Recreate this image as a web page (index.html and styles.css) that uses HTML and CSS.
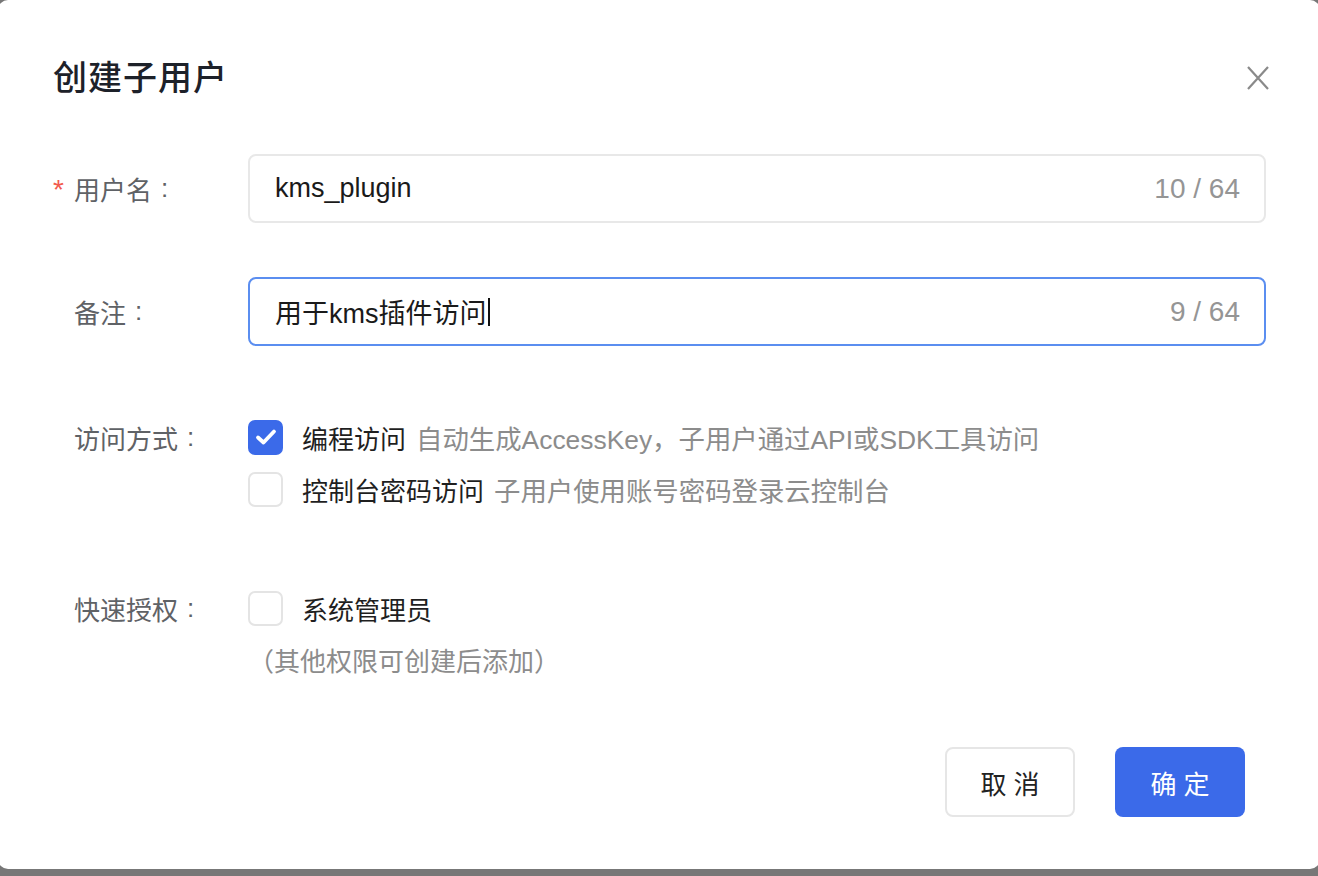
FILE: index.html
```html
<!DOCTYPE html>
<html lang="zh-CN">
<head>
<meta charset="utf-8">
<title>创建子用户</title>
<link rel="stylesheet" href="styles.css">
</head>
<body>
<div class="dialog">
  <header class="dialog-header">
    <h1 class="title">创建子用户</h1>
    <button class="close" type="button" aria-label="关闭">
      <svg width="24" height="24" viewBox="0 0 24 24"><path d="M2 1 L22 23 M22 1 L2 23" stroke="#8a8a8a" stroke-width="2.2" fill="none"/></svg>
    </button>
  </header>
  <div class="form">
    <div class="row row-input">
      <div class="label"><span class="req">*</span>用户名<span class="colon">:</span></div>
      <div class="input"><span class="value">kms_plugin</span><span class="count">10 / 64</span></div>
    </div>
    <div class="row row-input row-gap">
      <div class="label">备注<span class="colon">:</span></div>
      <div class="input focused"><span class="value">用于kms插件访问<span class="caret"></span></span><span class="count">9 / 64</span></div>
    </div>
    <div class="row row-options row-access">
      <div class="label label-line">访问方式<span class="colon">:</span></div>
      <div class="options">
        <div class="option">
          <span class="checkbox checked">
            <svg width="24" height="24" viewBox="0 0 24 24"><path d="M4 12.5 L9.5 17.5 L20 6.5" stroke="#fff" stroke-width="3.8" fill="none" stroke-linecap="round" stroke-linejoin="round"/></svg>
          </span>
          <span class="opt-text">编程访问</span><span class="opt-desc">自动生成AccessKey，子用户通过API或SDK工具访问</span>
        </div>
        <div class="option">
          <span class="checkbox"></span>
          <span class="opt-text">控制台密码访问</span><span class="opt-desc">子用户使用账号密码登录云控制台</span>
        </div>
      </div>
    </div>
    <div class="row row-options row-grant">
      <div class="label label-line">快速授权<span class="colon">:</span></div>
      <div class="options">
        <div class="option">
          <span class="checkbox"></span>
          <span class="opt-text">系统管理员</span>
        </div>
        <div class="note">（其他权限可创建后添加）</div>
      </div>
    </div>
  </div>
  <footer class="footer">
    <button class="btn btn-cancel" type="button">取 消</button>
    <button class="btn btn-primary" type="button">确 定</button>
  </footer>
</div>
</body>
</html>
```
FILE: styles.css
```css
* { box-sizing: border-box; }
html, body { margin: 0; padding: 0; }
body {
  background: #777777;
  font-family: "Liberation Sans", "Noto Sans CJK SC", sans-serif;
  overflow: hidden;
}
.dialog {
  margin-left: -2px;
  width: 1322px;
  height: 869px;
  background: #ffffff;
  border-radius: 10px;
  padding: 58px 54px 0 55px;
}
.dialog-header {
  display: flex;
  align-items: center;
  justify-content: space-between;
}
.title {
  margin: 0;
  font-size: 34px;
  line-height: 40px;
  font-weight: 500;
  letter-spacing: 1px;
  color: #1d2129;
}
.close {
  border: 0;
  background: none;
  padding: 0;
  width: 24px;
  height: 24px;
  margin-right: -4px;
  display: flex;
}
.form { margin-top: 56px; }
.row {
  display: grid;
  grid-template-columns: 195px 1fr;
}
.row-gap { margin-top: 54px; }
.row-access { margin-top: 65px; }
.row-grant { margin-top: 67px; }
.label {
  font-size: 26px;
  color: #5f6266;
  padding-left: 21px;
  display: flex;
  align-items: center;
  height: 69px;
}
.label-line { height: 52px; }
.req {
  color: #f25a4d;
  width: 21px;
  margin-left: -21px;
  font-size: 28px;
  position: relative;
  top: 1px;
}
.colon { margin-left: 9px; }
.input {
  height: 69px;
  border: 2px solid #e8e8e8;
  border-radius: 8px;
  display: flex;
  align-items: center;
  justify-content: space-between;
  padding: 0 24px 0 25px;
}
.input.focused { border-color: #5b8ef0; }
.value {
  font-size: 27px;
  color: #1a1a1a;
  display: flex;
  align-items: center;
}
.caret {
  display: inline-block;
  width: 2px;
  height: 28px;
  background: #111;
  margin-left: 1px;
}
.count {
  font-size: 28px;
  color: #959595;
}
.options { display: flex; flex-direction: column; }
.option {
  height: 52px;
  display: flex;
  align-items: center;
  font-size: 26px;
}
.checkbox {
  width: 35px;
  height: 35px;
  border: 2px solid #e4e4e4;
  border-radius: 7px;
  display: flex;
  align-items: center;
  justify-content: center;
  margin-right: 19px;
  flex: none;
}
.checkbox.checked {
  background: #3b6ae9;
  border-color: #3b6ae9;
}
.opt-text { color: #1f1f1f; }
.opt-desc { color: #8c8c8c; margin-left: 10px; font-size: 26.4px; }
.note {
  margin-top: 6px;
  line-height: 44px;
  font-size: 26px;
  color: #8c8c8c;
}
.footer {
  margin-top: 63px;
  display: flex;
  justify-content: flex-end;
  gap: 40px;
  padding-right: 21px;
}
.btn {
  width: 130px;
  height: 70px;
  border-radius: 8px;
  font-family: "Liberation Sans", "Noto Sans CJK SC", sans-serif;
  font-size: 26px;
  cursor: pointer;
}
.btn-cancel {
  background: #fff;
  border: 2px solid #e6e6e6;
  color: #222;
}
.btn-primary {
  background: #3b6ae9;
  border: 0;
  color: #fff;
}
```
